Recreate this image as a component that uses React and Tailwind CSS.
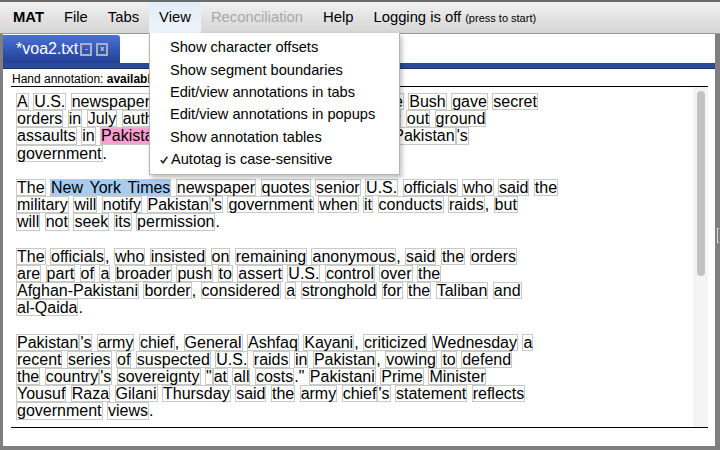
import React from "react";

// --- body text, one entry per rendered line; "^" joins a token to the previous one ---
const paragraphs = [
  [
    ["A U.S. newspaper writes that U.S. President George Bush gave secret"],
    ["orders in July authorizing US Special forces to carry out ground"],
    ["assaults in", { hl: "pink", text: "Pakistan" }, "without the formal approval of Pakistan ^'s"],
    ["government ^."],
  ],
  [
    ["The", { hl: "blue", text: "New York Times" }, "newspaper quotes senior U.S. officials who said the"],
    ["military will notify Pakistan ^'s government when it conducts raids ^, but"],
    ["will not seek its permission ^."],
  ],
  [
    ["The officials ^, who insisted on remaining anonymous ^, said the orders"],
    ["are part of a broader push to assert U.S. control over the"],
    ["Afghan-Pakistani border ^, considered a stronghold for the Taliban and"],
    ["al-Qaida ^."],
  ],
  [
    ["Pakistan ^'s army chief ^, General Ashfaq Kayani ^, criticized Wednesday a"],
    ["recent series of suspected U.S. raids in Pakistan ^, vowing to defend"],
    ['the country ^\'s sovereignty " ^at all costs ^." Pakistani Prime Minister'],
    ["Yousuf Raza Gilani Thursday said the army chief ^'s statement reflects"],
    ["government views ^."],
  ],
];

const menuItems = [
  "Show character offsets",
  "Show segment boundaries",
  "Edit/view annotations in tabs",
  "Edit/view annotations in popups",
  "Show annotation tables",
];

const parse = (str) =>
  str.split(" ").map((raw) => {
    const join = raw.startsWith("^");
    const t = join ? raw.slice(1) : raw;
    return { t, join, boxed: !/^[.,]+"?$/.test(t) };
  });

const Word = ({ children }) => (
  <span className="inline-block border border-[#c9c9c9] leading-[15.2px]">{children}</span>
);

const Tokens = ({ list, first }) =>
  list.map((tok, i) => (
    <React.Fragment key={i}>
      {!tok.join && !(first && i === 0) ? " " : ""}
      {tok.boxed ? <Word>{tok.t}</Word> : tok.t}
    </React.Fragment>
  ));

const Line = ({ chunks }) => (
  <div className="h-[17.2px] leading-[17.2px] whitespace-pre">
    {chunks.map((c, i) =>
      typeof c === "string" ? (
        <Tokens key={i} list={parse(c)} first={i === 0} />
      ) : (
        <React.Fragment key={i}>
          {i > 0 ? " " : ""}
          <span
            className={`inline-block leading-[17.2px] ${
              c.hl === "pink" ? "bg-[#f9a0d0]" : "bg-[#a3ccf5]"
            }`}
          >
            <Tokens list={parse(c.text)} first />
          </span>
        </React.Fragment>
      )
    )}
  </div>
);

const MenuBar = () => (
  <div className="h-[34px] border-t-2 border-[#6b6b6b] border-b border-b-[#9a9a9a] bg-gradient-to-b from-[#f1f1f1] to-[#d5d5d5] flex pl-[3px] text-[14.8px]">
    <div className="px-[10px] flex items-center font-bold">MAT</div>
    <div className="px-[10px] flex items-center">File</div>
    <div className="px-[10px] flex items-center">Tabs</div>
    <div className="px-[10px] flex items-center bg-gradient-to-b from-[#e2ecf8] to-[#eef4fb]">View</div>
    <div className="px-[10px] flex items-center text-[#a8a8a8]">Reconciliation</div>
    <div className="px-[10px] flex items-center">Help</div>
    <div className="px-[10px] flex items-center">
      Logging is off<span className="text-[11px] ml-[4px] mt-[2px]">(press to start)</span>
    </div>
  </div>
);

const TabButton = ({ label }) => (
  <div className="w-[12px] h-[13px] border-2 border-[#a9b0c6] flex items-center justify-center text-[8px] leading-none text-white">
    {label}
  </div>
);

const ViewMenu = () => (
  <div className="absolute left-[149px] top-[33px] w-[251px] h-[142px] bg-white border border-t-0 border-[#b4b4b4] shadow-[2px_3px_5px_rgba(0,0,0,0.25)] pt-[4px] text-[14.6px]">
    {menuItems.map((item) => (
      <div key={item} className="h-[22.4px] flex items-center pl-[20px]">
        {item}
      </div>
    ))}
    <div className="h-[22.4px] flex items-center pl-[10px]">
      <svg width="8" height="8" viewBox="0 0 8 8" className="mr-[3px]">
        <polyline points="0.8,4.2 3,6.8 7.4,0.8" fill="none" stroke="#222" strokeWidth="1.6" />
      </svg>
      Autotag is case-sensitive
    </div>
  </div>
);

export default function App() {
  return (
    <div className="relative w-[720px] h-[450px] overflow-hidden bg-[#7f7f7f] text-black font-[Liberation_Sans,Arial,sans-serif]">
      <MenuBar />
      <div className="flex h-[412px]">
        <div className="w-[3px]" />
        <div className="w-[712px] bg-white flex flex-col">
          {/* tab strip */}
          <div className="h-[29px] flex items-end">
            <div className="w-[117px] h-[28px] rounded-tr-[3px] bg-gradient-to-b from-[#4a72d7] to-[#213f95] flex items-center pl-[13px] text-white text-[16px]">
              <span className="mr-[2px]">*voa2.txt</span>
              <TabButton label="-" />
              <div className="w-[4px]" />
              <TabButton label="x" />
            </div>
          </div>
          <div className="h-[6px] bg-[#294a9e] border-b border-[#1b3276]" />
          <div className="pl-[8px] pr-[7px] flex flex-col">
            <div className="h-[18px] pt-[4px] leading-[13px] text-[12px] border-b border-black pl-[1px]">
              Hand annotation: <b>available</b>
            </div>
            <div className="h-[341px] flex border-b border-black">
              <div className="flex-1 pl-[5px] pt-[6px] text-[16px]">
                {paragraphs.map((p, i) => (
                  <div key={i} className="mb-[17.2px]">
                    {p.map((chunks, j) => (
                      <Line key={j} chunks={chunks} />
                    ))}
                  </div>
                ))}
              </div>
              <div className="w-[14px] bg-[#f4f4f4] border-l border-[#ebebeb] pt-[4px] pl-[2px]">
                <div className="w-[8px] h-[185px] rounded-full bg-[#c2c2c2]" />
              </div>
            </div>
          </div>
        </div>
        <div className="w-[5px] flex items-center">
          <div className="ml-[2px] mt-[-10px] w-[2px] h-[15px] border border-r-0 border-[#d8d8d8]" />
        </div>
      </div>
      <ViewMenu />
    </div>
  );
}
